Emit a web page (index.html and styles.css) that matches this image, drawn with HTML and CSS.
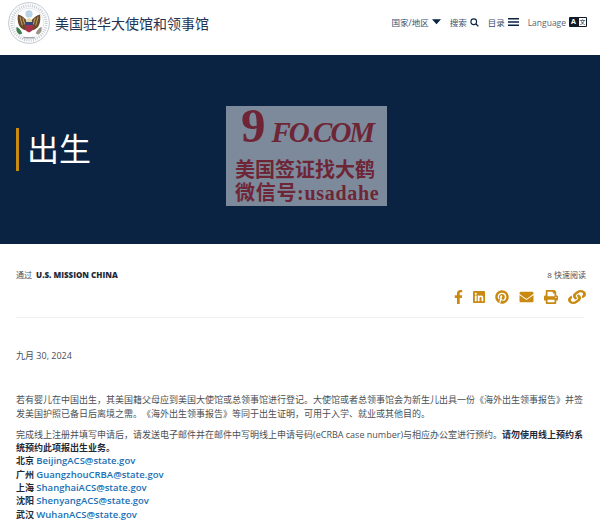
FILE: index.html
```html
<!DOCTYPE html>
<html lang="zh">

<head>
	<meta charset="UTF-8">
	<meta name="viewport" content="width=device-width, initial-scale=1.0">
	<title>出生</title>
	<link rel="stylesheet" href="styles.css">
</head>

<body>
	<header class="site-header">
		<a class="brand" href="#">
			<svg class="seal" viewBox="0 0 44 44">
				<circle cx="22" cy="22" r="21.300" fill="#fff" stroke="#aeb6c2" stroke-width=".8"/>
				<circle cx="22" cy="22" r="18" fill="none" stroke="#a9b1bd" stroke-width="3" stroke-dasharray="1 1.300" opacity=".7"/>
				<circle cx="22" cy="22" r="15.500" fill="#fff" stroke="#ccd1d9" stroke-width=".6"/>
				<circle cx="22" cy="12.500" r="3.800" fill="#b9d4e6"/>
				<path d="M20.500 21c-2-4-6-7-10-8-1 5 0 11 3 14 2 2 4 3 6.500 2.500z" fill="#6b4a2a"/>
				<path d="M23.500 21c2-4 6-7 10-8 1 5 0 11-3 14-2 2-4 3-6.500 2.500z" fill="#6b4a2a"/>
				<path d="M12.500 15.500l2.500 9M15.500 16.500l2 7M31.500 15.500l-2.500 9M28.500 16.500l-2 7" stroke="#d9c48a" stroke-width=".8"/>
				<path d="M19 20c0-2 1.500-3 3-3s3 1 3 3v1h-6z" fill="#e6d9a8"/>
				<path d="M18 21h8v7c0 2-2 3-4 4-2-1-4-2-4-4z" fill="#a8324a"/>
				<path d="M18 21h8v3h-8z" fill="#2c4a80"/>
				<path d="M9 26c2 1 5 4 6 7l-3 1c-2-1-4-4-3-8z" fill="#3f7f4f"/>
				<path d="M35 26c-2 1-5 4-6 7l3 1c2-1 4-4 3-8z" fill="#9a9488"/>
				<path d="M16 37.500h12" stroke="#8b93a0" stroke-width="1.200"/>
			</svg>
			<span class="brand-name">美国驻华大使馆和领事馆</span>
		</a>
		<nav class="top-nav">
			<a href="#">国家/地区
				<svg class="caret" viewBox="0 0 10 6"><path d="M0 0h10L5 5.500z"/></svg>
			</a>
			<a href="#">搜索
				<svg class="search" viewBox="0 0 12 12"><circle cx="5" cy="5" r="3.800" fill="none" stroke="#0a2342" stroke-width="1.500"/><path d="M8 8l3.200 3.200" stroke="#0a2342" stroke-width="1.700"/></svg>
			</a>
			<a href="#">目录
				<svg class="burger" viewBox="0 0 11 8"><path d="M0 0h11v1.500H0zM0 3.200h11v1.500H0zM0 6.400h11v1.500H0z"/></svg>
			</a>
			<a class="lang" href="#">Language
				<span class="lang-badge"><b>A</b><i>文</i></span>
			</a>
		</nav>
	</header>

	<section class="hero">
		<h1>出生</h1>
		<div class="watermark">
			<div class="wm-logo"><span class="wm-nine">9</span><span class="wm-fo">FO.COM</span></div>
			<div class="wm-line">美国签证找大鹤</div>
			<div class="wm-line wm-wechat">微信号:usadahe</div>
		</div>
	</section>

	<main class="content">
		<div class="meta">
			<div class="byline">通过 <strong>U.S. MISSION CHINA</strong></div>
			<div class="meta-right">
				<div class="read-time">8 快速阅读</div>
				<div class="share">
					<svg class="ic-f" viewBox="0 0 320 512"><path d="M279.14 288l14.22-92.66h-88.91v-60.13c0-25.35 12.42-50.06 52.24-50.06h40.42V6.26S260.43 0 225.36 0c-73.22 0-121.08 44.38-121.08 124.72v70.62H22.89V288h81.39v224h100.17V288z"/></svg>
					<svg class="ic-in" viewBox="0 0 448 512"><path d="M416 32H31.9C14.3 32 0 46.5 0 64.3v383.4C0 465.5 14.3 480 31.9 480H416c17.6 0 32-14.5 32-32.3V64.3c0-17.8-14.4-32.3-32-32.3zM135.4 416H69V202.2h66.5V416zm-33.2-243c-21.3 0-38.5-17.3-38.5-38.5S80.9 96 102.2 96c21.2 0 38.5 17.3 38.5 38.5 0 21.3-17.2 38.5-38.5 38.5zm282.1 243h-66.4V312c0-24.8-.5-56.7-34.5-56.7-34.6 0-39.9 27-39.9 54.9V416h-66.4V202.2h63.7v29.2h.9c8.9-16.8 30.6-34.5 62.9-34.5 67.2 0 79.7 44.3 79.7 101.9V416z"/></svg>
					<svg class="ic-p" viewBox="0 0 496 512"><path d="M496 256c0 137-111 248-248 248-25.6 0-50.2-3.9-73.4-11.1 10.1-16.5 25.2-43.5 30.8-65 3-11.6 15.4-59 15.4-59 8.1 15.4 31.7 28.5 56.8 28.5 74.8 0 128.7-68.8 128.7-154.3 0-81.9-66.9-143.2-152.9-143.2-107 0-163.9 71.8-163.9 150.1 0 36.4 19.4 81.7 50.3 96.1 4.7 2.2 7.2 1.2 8.3-3.3.8-3.4 5-20.3 6.9-28.1.6-2.5.3-4.7-1.7-7.1-10.1-12.5-18.3-35.3-18.3-56.6 0-54.7 41.4-107.6 112-107.6 60.9 0 103.6 41.5 103.6 100.9 0 67.1-33.9 113.6-78 113.6-24.3 0-42.6-20.1-36.7-44.8 7-29.5 20.5-61.3 20.5-82.6 0-19-10.2-34.9-31.4-34.9-24.9 0-44.9 25.7-44.9 60.2 0 22 7.4 36.8 7.4 36.8s-24.5 103.8-29 123.2c-5 21.4-3 51.6-.9 71.2C65.4 450.9 0 361.1 0 256 0 119 111 8 248 8s248 111 248 248z"/></svg>
					<svg class="ic-m" viewBox="0 0 512 512"><path d="M502.3 190.8c3.9-3.1 9.7-.2 9.7 4.7V400c0 26.5-21.5 48-48 48H48c-26.5 0-48-21.5-48-48V195.6c0-5 5.7-7.8 9.7-4.7 22.4 17.4 52.1 39.5 154.1 113.6 21.1 15.4 56.7 47.8 92.2 47.6 35.7.3 72-32.8 92.3-47.6 102-74.1 131.6-96.3 154-113.7zM256 320c23.2.4 56.6-29.2 73.4-41.4 132.7-96.3 142.8-104.7 173.4-128.7 5.8-4.5 9.2-11.5 9.2-18.9v-19c0-26.5-21.5-48-48-48H48C21.5 64 0 85.5 0 112v19c0 7.4 3.4 14.3 9.2 18.9 30.6 23.9 40.7 32.4 173.4 128.7 16.8 12.2 50.2 41.8 73.4 41.4z"/></svg>
					<svg class="ic-pr" viewBox="0 0 512 512"><path d="M448 192V77.25c0-8.49-3.37-16.62-9.37-22.63L393.37 9.37c-6-6-14.14-9.37-22.63-9.37H96C78.33 0 64 14.33 64 32v160c-35.35 0-64 28.65-64 64v112c0 8.84 7.16 16 16 16h48v96c0 17.67 14.33 32 32 32h320c17.67 0 32-14.33 32-32v-96h48c8.84 0 16-7.16 16-16V256c0-35.35-28.65-64-64-64zm-64 256H128v-96h256v96zm0-224H128V64h192v48c0 8.84 7.16 16 16 16h48v96zm48 72c-13.25 0-24-10.75-24-24 0-13.26 10.75-24 24-24s24 10.74 24 24c0 13.25-10.75 24-24 24z"/></svg>
					<svg class="ic-l" viewBox="0 0 512 512" preserveAspectRatio="none"><path d="M326.612 185.391c59.747 59.809 58.927 155.698.36 214.59-.11.12-.24.25-.36.37l-67.2 67.2c-59.27 59.27-155.699 59.262-214.96 0-59.27-59.26-59.27-155.7 0-214.96l37.106-37.106c9.84-9.84 26.786-3.3 27.294 10.606.648 17.722 3.826 35.527 9.69 52.721 1.986 5.822.567 12.262-3.783 16.612l-13.087 13.087c-28.026 28.026-28.905 73.66-1.155 101.96 28.024 28.579 74.086 28.749 102.325.51l67.2-67.19c28.191-28.191 28.073-73.757 0-101.83-3.701-3.694-7.429-6.564-10.341-8.569a16.037 16.037 0 0 1-6.947-12.606c-.396-10.567 3.348-21.456 11.698-29.806l21.054-21.055c5.521-5.521 14.182-6.199 20.584-1.731a152.482 152.482 0 0 1 20.522 17.197zM467.547 44.449c-59.261-59.262-155.69-59.27-214.96 0l-67.2 67.2c-.12.12-.25.25-.36.37-58.566 58.892-59.387 154.781.36 214.59a152.454 152.454 0 0 0 20.521 17.196c6.402 4.468 15.064 3.789 20.584-1.731l21.054-21.055c8.35-8.35 12.094-19.239 11.698-29.806a16.037 16.037 0 0 0-6.947-12.606c-2.912-2.005-6.64-4.875-10.341-8.569-28.073-28.073-28.191-73.639 0-101.83l67.2-67.19c28.239-28.239 74.3-28.069 102.325.51 27.75 28.3 26.872 73.934-1.155 101.96l-13.087 13.087c-4.35 4.35-5.769 10.79-3.783 16.612 5.864 17.194 9.042 34.999 9.69 52.721.509 13.906 17.454 20.446 27.294 10.606l37.106-37.106c59.271-59.259 59.271-155.699.001-214.959z"/></svg>
				</div>
			</div>
		</div>

		<p class="date">九月 30, 2024</p>

		<p>若有婴儿在中国出生，其美国籍父母应到美国大使馆或总领事馆进行登记。大使馆或者总领事馆会为新生儿出具一份《海外出生领事报告》并签发美国护照已备日后离境之需。《海外出生领事报告》等同于出生证明，可用于入学、就业或其他目的。</p>

		<p>完成线上注册并填写申请后，请发送电子邮件并在邮件中写明线上申请号码(eCRBA case number)与相应办公室进行预约。<strong>请勿使用线上预约系统预约此项报出生业务。</strong><br>
			<strong>北京</strong> <a href="#">BeijingACS@state.gov</a><br>
			<strong>广州</strong> <a href="#">GuangzhouCRBA@state.gov</a><br>
			<strong>上海</strong> <a href="#">ShanghaiACS@state.gov</a><br>
			<strong>沈阳</strong> <a href="#">ShenyangACS@state.gov</a><br>
			<strong>武汉</strong> <a href="#">WuhanACS@state.gov</a>
		</p>
	</main>
</body>

</html>
```

FILE: styles.css
```css
* {
	box-sizing: border-box;
}

html, body {
	height: 528px;
	overflow: hidden;
}

body {
	margin: 0;
	background: #fff;
	color: #4a4f56;
	font-family: "Open Sans", "Noto Sans CJK SC", sans-serif;
	font-size: 9px;
	text-spacing-trim: space-all;
}

a {
	text-decoration: none;
}

.site-header {
	height: 55px;
	padding: 0 13px 0 8px;
	display: flex;
	align-items: center;
	justify-content: space-between;
}

.brand {
	display: flex;
	align-items: center;
	gap: 5px;
	margin-top: -9px;
}

.seal {
	width: 42px;
	height: 42px;
}

.brand-name {
	font-size: 14px;
	font-weight: 400;
	color: #1e3554;
	font-family: "Liberation Serif", "Noto Sans CJK SC", serif;
}

.top-nav {
	display: flex;
	align-items: center;
	gap: 9px;
	margin-top: -11px;
}

.top-nav a {
	display: flex;
	align-items: center;
	gap: 3px;
	color: #35506f;
	font-size: 8.500px;
}

.top-nav .lang {
	color: #5b6470;
}

.caret {
	width: 9px;
	height: 6px;
	fill: #0a2342;
}

.search {
	width: 9px;
	height: 9px;
}

.burger {
	width: 11px;
	height: 8px;
	fill: #0a2342;
}

.lang-badge {
	display: flex;
	align-items: center;
	justify-content: space-between;
	width: 18px;
	height: 10px;
	padding: 0 1px 0 2px;
	background: #111a28;
	border-radius: 1px;
	color: #fff;
	font-size: 7px;
	line-height: 10px;
}

.lang-badge i {
	font-style: normal;
	font-size: 6px;
	background: #fff;
	color: #111a28;
	height: 8px;
	line-height: 8px;
	width: 7px;
	text-align: center;
}

.hero {
	position: relative;
	height: 189px;
	background: #0a2342;
	padding: 0 16px;
	display: flex;
	align-items: center;
}

.hero h1 {
	margin: 0;
	padding-left: 8px;
	border-left: 3px solid #c98a12;
	height: 43px;
	line-height: 41px;
	font-size: 32px;
	font-weight: 400;
	color: #fff;
}

/* image posee sur le bandeau */
.watermark {
	position: absolute;
	left: 226px;
	top: 51px;
	width: 161px;
	height: 100px;
	background: #7d8a9c;
	color: #6e2636;
	font-family: "Liberation Serif", "Noto Sans CJK SC", serif;
	font-weight: 700;
}

.wm-logo {
	display: flex;
	align-items: baseline;
	gap: 6px;
	height: 53px;
	padding-left: 15px;
	white-space: nowrap;
}

.wm-nine {
	font-size: 49px;
	line-height: 40px;
}

.wm-fo {
	font-size: 29px;
	font-style: italic;
	letter-spacing: -2px;
	line-height: 40px;
}

.wm-line {
	margin-left: 9px;
	font-size: 20px;
	line-height: 23px;
	white-space: nowrap;
}

.wm-wechat {
	letter-spacing: .7px;
}

.content {
	padding: 0 16px;
}

.content p {
	margin: 0 0 8px;
	line-height: 13.300px;
	font-size: 9px;
}

.meta {
	height: 74px;
	padding-top: 24px;
	display: flex;
	justify-content: space-between;
	border-bottom: 1px solid #eef0f2;
}

.byline {
	font-size: 8px;
	line-height: 13px;
}

.byline strong {
	margin-left: 2px;
	font-size: 8px;
	font-weight: 800;
	color: #0a2342;
}

.meta-right {
	display: flex;
	flex-direction: column;
	align-items: flex-end;
	margin-right: -2px;
}

.read-time {
	font-size: 8px;
	line-height: 13px;
}

.share {
	margin-top: 9px;
	display: flex;
	align-items: center;
	gap: 10px;
}

.share svg {
	height: 14px;
	fill: #c98a12;
}

.ic-f {
	width: 9px;
}

.ic-in {
	width: 12px;
}

.ic-p {
	width: 14px;
}

.ic-m {
	width: 15px;
}

.ic-pr {
	width: 14px;
}

.ic-l {
	width: 18px;
}

.content .date {
	margin: 31px 0 31px;
}

.content strong {
	color: #1f2a38;
}

.content a {
	color: #1a6fb5;
	font-weight: 600;
	font-size: 9.500px;
}
```
